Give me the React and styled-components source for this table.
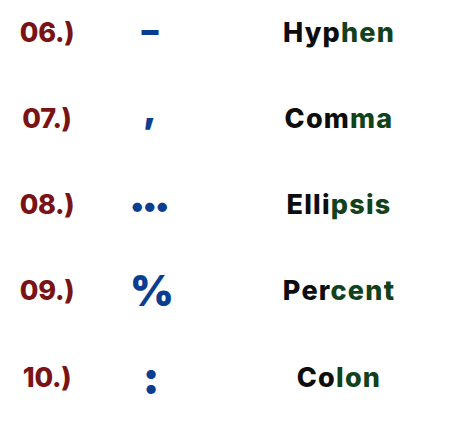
import React from "react";
import styled, { createGlobalStyle } from "styled-components";

const Global = createGlobalStyle`
  html, body { margin: 0; padding: 0; background: #ffffff; }
  body { font-family: "Inter", "Liberation Sans", sans-serif; }
`;

const List = styled.div`
  width: 474px;
  height: 435px;
  box-sizing: border-box;
  padding-top: 12px;
  display: flex;
  flex-direction: column;
  gap: 46.3px;
  background: #ffffff;
`;

const Row = styled.div`
  display: grid;
  grid-template-columns: 94px 112px 1fr;
  height: 40px;
  align-items: center;
`;

const Num = styled.div`
  text-align: center;
  color: #7a1315;
  font-family: "Inter", sans-serif;
  font-weight: 800;
  font-size: 27px;
  letter-spacing: -0.3px;
`;

const Sym = styled.div`
  display: flex;
  justify-content: center;
  align-items: center;
  height: 40px;
  color: #0b3d91;
  font-family: "Inter", sans-serif;
  font-weight: 900;
  font-size: ${(p) => p.$size || 34}px;
  letter-spacing: ${(p) => p.$ls || 0}px;
  line-height: 1;
  transform: translate(${(p) => p.$dx || 0}px, ${(p) => p.$dy || 0}px);
`;

const Word = styled.div`
  text-align: center;
  padding-right: 2px;
  color: #0d0d0d;
  font-family: "Inter", sans-serif;
  font-weight: 800;
  font-size: 27px;
  letter-spacing: 1.2px;
`;

const Green = styled.span`
  color: #12421c;
`;

const rows = [
  { n: "06.)", s: "–", a: "Hyp", b: "hen", size: 34, dy: -2 },
  { n: "07.)", s: ",", a: "Com", b: "ma", size: 36, dy: -9 },
  { n: "08.)", s: "•••", a: "Elli", b: "psis", size: 30, ls: 0.5, dx: 0 },
  { n: "09.)", s: "%", a: "Per", b: "cent", size: 42, dx: 2 },
  { n: "10.)", s: ":", a: "Co", b: "lon", size: 46, dx: 1 },
];

export default function App() {
  return (
    <>
      <Global />
      <List>
        {rows.map((r) => (
          <Row key={r.n}>
            <Num>{r.n}</Num>
            <Sym $size={r.size} $ls={r.ls} $dx={r.dx} $dy={r.dy}>
              {r.s}
            </Sym>
            <Word>
              {r.a}
              <Green>{r.b}</Green>
            </Word>
          </Row>
        ))}
      </List>
    </>
  );
}
